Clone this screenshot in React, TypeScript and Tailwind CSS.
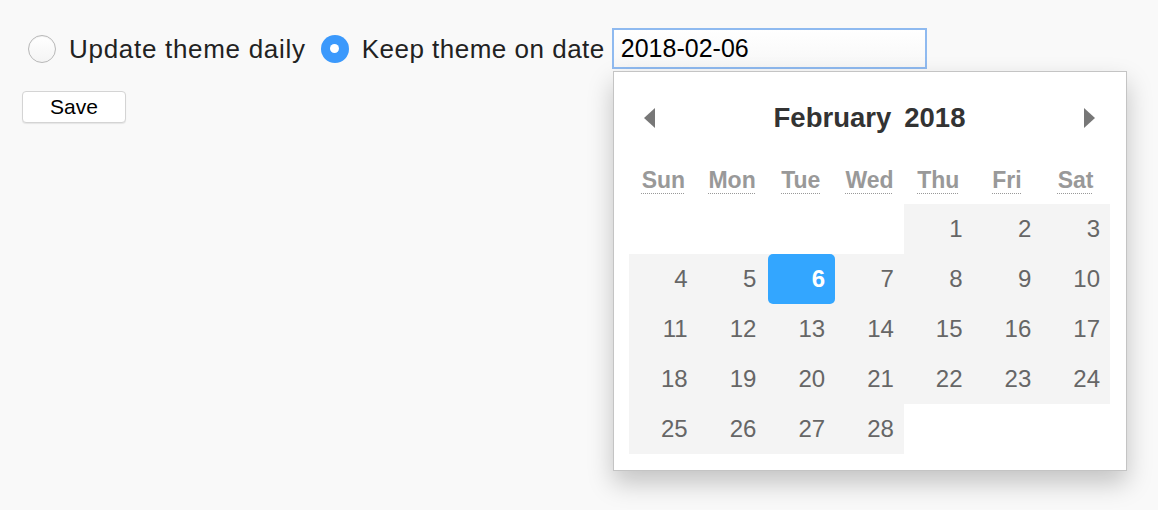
import React from "react";

const FONT = { fontFamily: '"Liberation Sans", Arial, sans-serif' };

function Radio({ checked }: { checked?: boolean }) {
  if (checked) {
    return (
      <span className="flex h-[28px] w-[28px] items-center justify-center rounded-full bg-[#3b99fc]">
        <span className="h-[9px] w-[9px] rounded-full bg-white" />
      </span>
    );
  }
  return (
    <span className="block h-[28px] w-[28px] rounded-full border border-[#b8b8b8] bg-gradient-to-b from-white to-[#f4f4f4] shadow-[inset_0_1px_1px_rgba(0,0,0,0.05)]" />
  );
}

function Triangle({ dir }: { dir: "left" | "right" }) {
  return (
    <svg width="12" height="20" viewBox="0 0 12 20">
      {dir === "left" ? (
        <polygon points="11,0 11,20 0,10" fill="#777" />
      ) : (
        <polygon points="1,0 1,20 12,10" fill="#777" />
      )}
    </svg>
  );
}

const dayNames = ["Sun", "Mon", "Tue", "Wed", "Thu", "Fri", "Sat"];

export default function App() {
  const cells: (number | null)[] = [null, null, null, null];
  for (let i = 1; i <= 28; i++) cells.push(i);
  while (cells.length < 35) cells.push(null);

  return (
    <div className="relative h-[510px] w-[1158px] overflow-hidden bg-[#f9f9f9] text-[#1a1a1a]" style={FONT}>
      <div className="pl-[22px] pt-[28px]">
        <div className="flex items-center">
          <span className="ml-[6px]">
            <Radio />
          </span>
          <span className="ml-[13px] text-[26px] leading-none tracking-[0.7px] text-[#222]">Update theme daily</span>
          <span className="ml-[15px]">
            <Radio checked />
          </span>
          <span className="ml-[13px] text-[26px] leading-none tracking-[0.5px] text-[#222]">Keep theme on date</span>
          <div className="ml-[7px] flex h-[41px] w-[315px] items-center border-2 border-[#8fbaf0] bg-gradient-to-b from-white to-[#f7f7f7] pl-[7px] text-[25px] text-black">
            2018-02-06
          </div>
        </div>
        <button className="mt-[22px] flex h-[32px] w-[104px] items-center justify-center rounded-[4px] border border-[#d4d4d4] bg-white text-[21px] text-black shadow-[0_1px_1px_rgba(0,0,0,0.08)]">
          Save
        </button>
      </div>

      <div className="absolute left-[613px] top-[71px] h-[400px] w-[514px] border border-[#c4c4c4] bg-white pl-[15px] pt-[31px] shadow-[0_12px_24px_rgba(0,0,0,0.22)]">
        <div className="flex h-[30px] w-[481px] items-center justify-between px-[15px]">
          <Triangle dir="left" />
          <div className="flex items-center gap-[13px] text-[27.5px] font-bold leading-none text-[#333]">
            <span>February</span>
            <span>2018</span>
          </div>
          <Triangle dir="right" />
        </div>
        <div className="mt-[33px] grid h-[34px] w-[481px] grid-cols-7 items-start">
          {dayNames.map((d) => (
            <div key={d} className="text-center text-[23px] font-bold leading-[28px] text-[#999]">
              <span className="underline decoration-dotted decoration-1 underline-offset-[5px]">{d}</span>
            </div>
          ))}
        </div>
        <div className="mt-[4px] grid w-[481px] grid-cols-7">
          {cells.map((n, i) => (
            <div key={i} className={`h-[50px] ${n === null ? "bg-white" : "bg-[#f4f4f4]"}`}>
              {n !== null && (
                <div
                  className={
                    n === 6
                      ? "ml-[2px] flex h-[50px] items-center justify-end rounded-[5px] bg-[#33a6ff] pr-[10px] text-[24px] font-bold text-white"
                      : "flex h-[50px] items-center justify-end pr-[10px] text-[24px] text-[#666]"
                  }
                >
                  {n}
                </div>
              )}
            </div>
          ))}
        </div>
      </div>
    </div>
  );
}
